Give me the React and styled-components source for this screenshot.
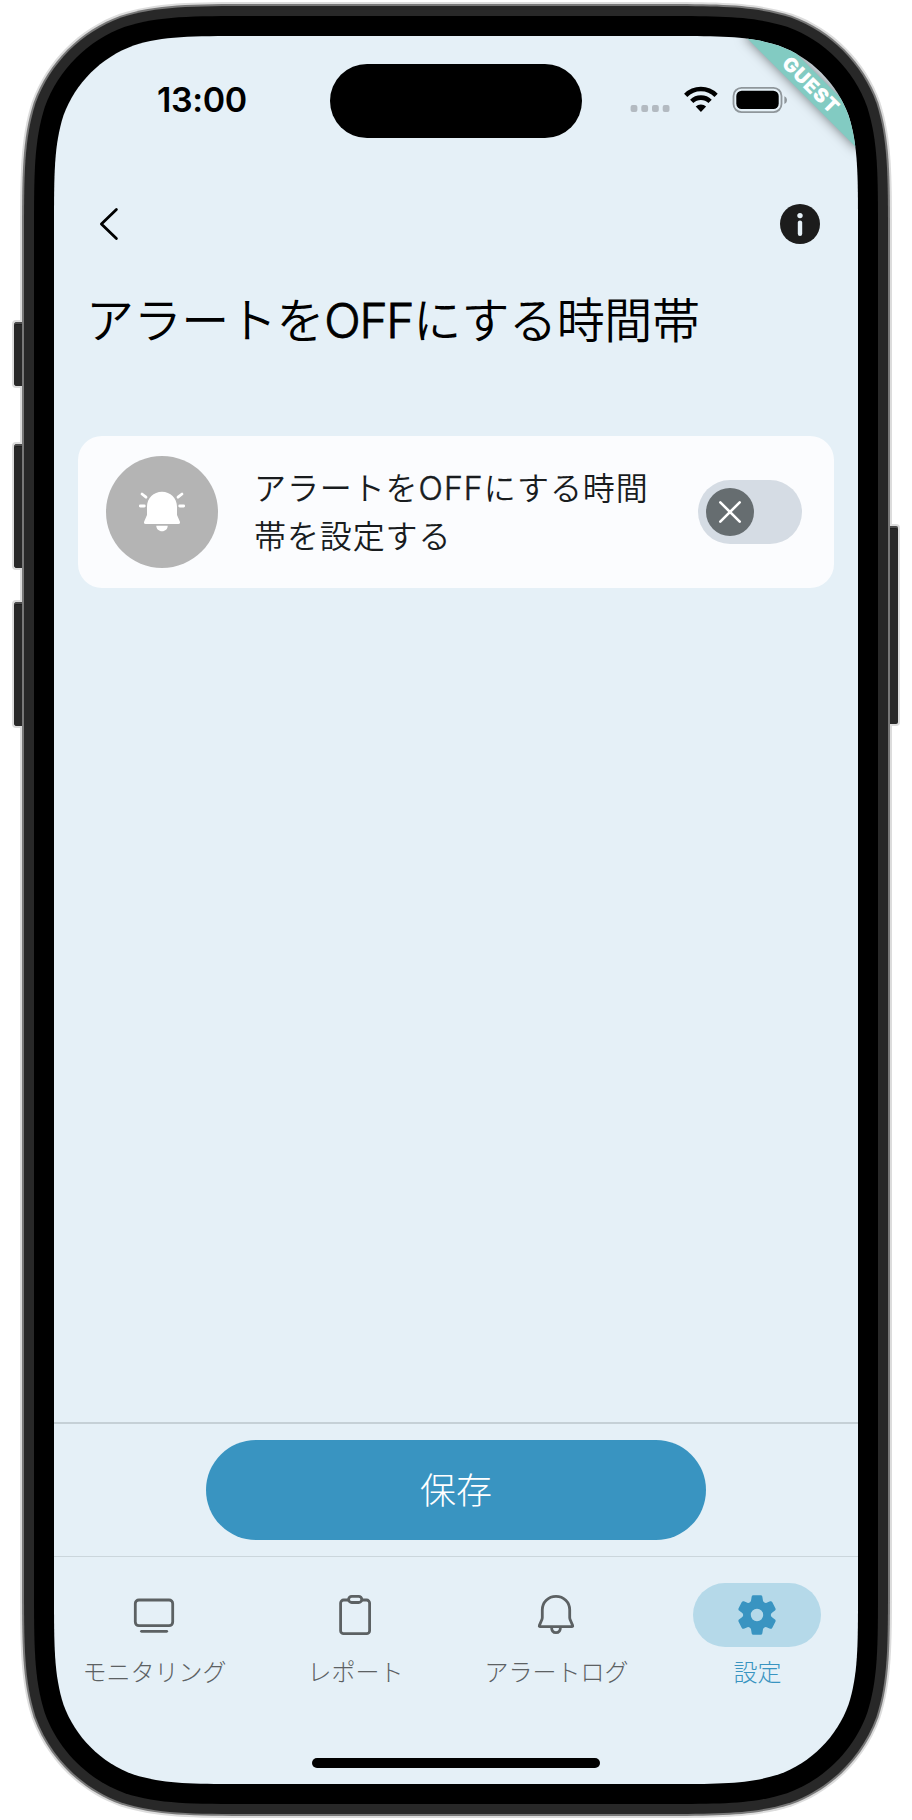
import React from 'react';
import styled, { createGlobalStyle } from 'styled-components';

const Global = createGlobalStyle`
  *, *::before, *::after { box-sizing: border-box; }
  body { margin: 0; background: #fff; }
`;

const JP = `Inter, 'Noto Sans CJK JP', sans-serif`;

/* Continuous-curvature rounded rectangle, as used by the device's corners. */
const squircle = (w, h, r) => {
  const a = 1.52866 * r, b = 1.08849 * r, c = 0.86841 * r, d = 0.63149 * r;
  const e = 0.07491 * r, f = 0.37282 * r, g = 0.16906 * r;
  return [
    `M${a} 0 L${w - a} 0`,
    `C${w - b} 0 ${w - c} 0 ${w - d} ${e}`,
    `C${w - f} ${g} ${w - g} ${f} ${w - e} ${d}`,
    `C${w} ${c} ${w} ${b} ${w} ${a}`,
    `L${w} ${h - a}`,
    `C${w} ${h - b} ${w} ${h - c} ${w - e} ${h - d}`,
    `C${w - g} ${h - f} ${w - f} ${h - g} ${w - d} ${h - e}`,
    `C${w - c} ${h} ${w - b} ${h} ${w - a} ${h}`,
    `L${a} ${h}`,
    `C${b} ${h} ${c} ${h} ${d} ${h - e}`,
    `C${f} ${h - g} ${g} ${h - f} ${e} ${h - d}`,
    `C0 ${h - c} 0 ${h - b} 0 ${h - a}`,
    `L0 ${a}`,
    `C0 ${b} 0 ${c} ${e} ${d}`,
    `C${g} ${f} ${f} ${g} ${d} ${e}`,
    `C${c} 0 ${b} 0 ${a} 0 Z`,
  ].join(' ');
};

const Stage = styled.div`
  display: flex;
  width: 912px;
  height: 1820px;
  padding-top: 2px;
`;

const Rail = styled.div`
  display: flex;
  flex-direction: column;
  width: 20px;
  flex: none;
  z-index: 1;
  align-items: ${(p) => (p.$side === 'left' ? 'flex-end' : 'flex-start')};
`;

const SideKey = styled.div`
  width: 10px;
  height: ${(p) => p.$h}px;
  margin-top: ${(p) => p.$gap}px;
  background: #282828;
  border: 2px solid #dcdcdc;
  box-shadow: inset 0 2px #4b4b4b, inset 0 3px #1d1d1d;
  ${(p) =>
    p.$side === 'left'
      ? 'margin-right: -2px; border-right: 0; border-radius: 4px 0 0 4px;'
      : 'margin-left: -2px; border-left: 0; border-radius: 0 4px 4px 0;'}
`;

const Shell = styled.div`
  flex: none;
  width: ${(p) => p.$w}px;
  height: ${(p) => p.$h}px;
  padding: ${(p) => p.$pad}px;
  background: ${(p) => p.$color};
  clip-path: path('${(p) => squircle(p.$w, p.$h, p.$r)}');
`;

const Screen = styled.main`
  position: relative;
  display: flex;
  flex-direction: column;
  width: 804px;
  height: 1748px;
  background: #e5f0f7;
  clip-path: path('${squircle(804, 1748, 126)}');
  font-family: ${JP};
  color: #000;
`;

const StatusBar = styled.div`
  display: grid;
  grid-template-columns: 276px 252px 276px;
  align-items: center;
  height: 74px;
  margin-top: 27.5px;
`;

const Clock = styled.div`
  padding: 0 0 2px 103px;
  font-size: 34px;
  line-height: 40px;
  font-weight: 600;
  letter-spacing: -0.4px;
`;

const Island = styled.div`
  height: 74.5px;
  border-radius: 38px;
  background: #000;
`;

const StatusIcons = styled.div`
  display: flex;
  align-items: center;
  padding: 0 0 2px 48px;
  height: 42px;
`;

const Ribbon = styled.div`
  position: absolute;
  top: 0;
  right: 0;
  width: 0;
  height: 0;
  transform: rotate(45deg);
`;

const RibbonLabel = styled.div`
  width: 160px;
  height: 24px;
  margin: 56px 0 0 -80px;
  padding-left: 3px;
  background: #82cbc2;
  box-shadow: 0 0 12px rgba(0, 0, 0, 0.5);
  color: #fff;
  font: 900 19.6px/25px Inter, sans-serif;
  letter-spacing: 0.8px;
  text-align: center;
`;

const AppBar = styled.header`
  display: flex;
  align-items: center;
  justify-content: space-between;
  height: 112px;
  margin-top: 30.5px;
  padding: 0 38px 0 34px;
`;

const Title = styled.h1`
  margin: 13px 0 0;
  padding-left: 32px;
  font-size: 48px;
  line-height: 56px;
  font-weight: 350;
  letter-spacing: -0.35px;
  white-space: nowrap;
`;

const Latin = styled.span`
  font-family: Inter, sans-serif;
  font-weight: 350;
  letter-spacing: ${(p) => p.$track}px;
  -webkit-text-stroke: ${(p) => p.$stroke}px currentColor;
`;

const Card = styled.section`
  display: flex;
  align-items: center;
  height: 152px;
  margin: 87px 24px 0;
  padding: 0 32px 0 28px;
  border-radius: 24px;
  background: #fbfcfe;
`;

const Badge = styled.div`
  display: grid;
  place-items: center;
  width: 112px;
  height: 112px;
  border-radius: 50%;
  background: #b4b4b4;
`;

const CardText = styled.p`
  flex: 1;
  margin: 0;
  padding: 2px 0 0 36px;
  font-size: 32px;
  line-height: 48px;
  font-weight: 350;
  letter-spacing: 0.9px;
  color: #191c1e;
  white-space: nowrap;
`;

const Switch = styled.div`
  width: 104px;
  height: 64px;
  padding: 8px;
  border-radius: 32px;
  background: #d5dce4;
`;

const Knob = styled.div`
  display: grid;
  place-items: center;
  width: 48px;
  height: 48px;
  border-radius: 50%;
  background: #666d70;
`;

const SaveBar = styled.div`
  display: flex;
  justify-content: center;
  height: 134px;
  margin-top: auto;
  padding-top: 16px;
  border-top: 2px solid #c5d0d6;
`;

const SaveButton = styled.button`
  width: 500px;
  height: 100px;
  padding: 0 0 4px;
  border: 0;
  border-radius: 50px;
  background: #3994c1;
  color: #fff;
  font-family: ${JP};
  font-size: 36px;
  font-weight: 300;
`;

const NavBar = styled.nav`
  display: grid;
  grid-template-columns: repeat(4, 1fr);
  height: 228px;
  padding-top: 26px;
  border-top: 1px solid #cbd6dc;
`;

const NavItem = styled.div`
  display: flex;
  flex-direction: column;
  align-items: center;
  height: 120px;
  color: ${(p) => (p.$active ? '#3994c1' : '#5c6163')};
`;

const NavPill = styled.div`
  display: grid;
  place-items: center;
  width: 128px;
  height: 64px;
  margin-right: 0.5px;
  border-radius: 32px;
  background: ${(p) => (p.$active ? '#b5d9e9' : 'transparent')};
`;

const NavLabel = styled.span`
  margin-top: 10px;
  font-size: 24px;
  line-height: 32px;
  font-weight: 300;
  white-space: nowrap;
`;

const HomeBar = styled.div`
  position: absolute;
  left: 258px;
  bottom: 16px;
  width: 288px;
  height: 10px;
  border-radius: 5px;
  background: #000;
`;

const Icon = ({ children }) => (
  <svg width="48" height="48" viewBox="0 0 48 48" fill="none" stroke="currentColor"
    strokeWidth="2.8" strokeLinecap="round" strokeLinejoin="round">
    {children}
  </svg>
);

const MonitorIcon = () => (
  <Icon>
    <rect x="5.3" y="9" width="37.4" height="25.7" rx="3.6" />
    <path d="M11.5 40.3H36.7" />
  </Icon>
);

const ReportIcon = () => (
  <Icon>
    <path d="M17 9H12.6a3 3 0 0 0-3 3V39.7a3 3 0 0 0 3 3H35.6a3 3 0 0 0 3-3V12a3 3 0 0 0-3-3H31" />
    <rect x="17.6" y="5.3" width="13.2" height="6.2" rx="3.1" />
  </Icon>
);

const BellIcon = () => (
  <Icon>
    <path d="M10.3 18.8C10.3 11.2 16.3 5.3 24 5.3S37.7 11.2 37.7 18.8V26.5Q37.7 27.8 38.3 29L40.6 34.4Q41.1 35.7 39.8 35.7H8.2Q6.9 35.7 7.4 34.4L9.7 29Q10.3 27.8 10.3 26.5Z" />
    <path d="M19.6 36.5C19.6 39.8 21.5 41.7 24 41.7S28.4 39.8 28.4 36.5" />
  </Icon>
);

const GearIcon = () => (
  <svg width="48" height="48" viewBox="0 0 48 48" fill="currentColor">
    <path
      fillRule="evenodd"
      d="M20.4 4.3H27.6Q29 4.3 29.3 5.6L30 9.8Q30.3 11 31.4 11.5Q32.4 12.2 33.6 11.7L37.1 10.3Q38.4 9.8 39.2 11L42.4 17.3Q43 18.5 42 19.4L39 21.8Q37.8 22.7 37.8 24T39 26.2L42 28.6Q43 29.5 42.4 30.7L39.2 37Q38.4 38.2 37.1 37.7L33.6 36.3Q32.4 35.8 31.4 36.5Q30.3 37 30 38.2L29.3 42.4Q29 43.7 27.6 43.7H20.4Q19 43.7 18.7 42.4L18 38.2Q17.7 37 16.6 36.5Q15.6 35.8 14.4 36.3L10.9 37.7Q9.6 38.2 8.8 37L5.6 30.7Q5 29.5 6 28.6L9 26.2Q10.2 25.3 10.2 24T9 21.8L6 19.4Q5 18.5 5.6 17.3L8.8 11Q9.6 9.8 10.9 10.3L14.4 11.7Q15.6 12.2 16.6 11.5Q17.7 11 18 9.8L18.7 5.6Q19 4.3 20.4 4.3ZM24 17.8a6.2 6.2 0 1 0 0 12.4a6.2 6.2 0 1 0 0-12.4Z"
    />
  </svg>
);

const AlarmIcon = () => (
  <svg width="48" height="48" viewBox="0 0 48 48" fill="#fff">
    <path d="M9 18.7C9 10.4 15.6 3.8 24 3.8S39 10.4 39 18.7V27L41.8 33.6Q42.6 36 40.2 36H7.8Q5.4 36 6.2 33.6L9 27Z" />
    <path d="M18.3 37.8H29.7C29.7 41 27.2 43.3 24 43.3S18.3 41 18.3 37.8Z" />
    <g stroke="#fff" strokeWidth="2.8" strokeLinecap="round">
      <path d="M4 6L8 9.2M2.3 18H6.3M44 6L40 9.2M45.7 18H41.7" />
    </g>
  </svg>
);

const BackIcon = () => (
  <svg width="42" height="48" viewBox="0 0 42 48" fill="none" stroke="#000" strokeWidth="2.8"
    strokeLinecap="round" strokeLinejoin="round">
    <path d="M28.4 9.4L13.4 24L28.4 38.6" />
  </svg>
);

const InfoIcon = () => (
  <svg width="40" height="40" viewBox="0 0 40 40">
    <circle cx="20" cy="20" r="20" fill="#1c1c1c" />
    <circle cx="20" cy="11.6" r="2.7" fill="#e5f0f7" />
    <rect x="17.8" y="16.4" width="4.4" height="15.6" rx="2.2" fill="#e5f0f7" />
  </svg>
);

const CloseIcon = () => (
  <svg width="24" height="24" viewBox="0 0 24 24" stroke="#fff" strokeWidth="2.6" strokeLinecap="round">
    <path d="M2.3 2.3L21.7 21.7M21.7 2.3L2.3 21.7" />
  </svg>
);

const Signals = () => (
  <svg width="160" height="40" viewBox="0 0 160 40">
    {[0, 1, 2, 3].map((i) => (
      <rect key={i} x={0.6 + i * 10.7} y="25" width="6.8" height="7" rx="2" fill="#b3bac1" />
    ))}
    <g transform="translate(70.9 19.4)" fill="none" stroke="#000" strokeWidth="4.6">
      <path d="M-15.2 -4.1A21.6 21.6 0 0 1 15.2 -4.1" />
      <path d="M-9.2 2A13 13 0 0 1 9.2 2" />
      <path d="M-5.2 7.2A7.3 7.3 0 0 1 5.2 7.2L0.5 12Q0 12.5 -0.5 12Z" fill="#000" stroke="none" />
    </g>
    <rect x="103.5" y="7.9" width="48" height="24.2" rx="8" fill="none" stroke="#8f969b" strokeWidth="1.8" />
    <rect x="106.3" y="10.7" width="42.4" height="18.4" rx="5.4" fill="#000" />
    <path d="M154.4 16.2C157.8 17.6 157.8 22.6 154.4 24Z" fill="#8f969b" />
  </svg>
);

const NAV = [
  { label: 'モニタリング', Glyph: MonitorIcon },
  { label: 'レポート', Glyph: ReportIcon },
  { label: 'アラートログ', Glyph: BellIcon },
  { label: '設定', Glyph: GearIcon, active: true },
];

export default function App() {
  return (
    <>
      <Global />
      <Stage>
        <Rail $side="left">
          <SideKey $side="left" $h={68} $gap={318} />
          <SideKey $side="left" $h={128} $gap={54} />
          <SideKey $side="left" $h={128} $gap={30} />
        </Rail>
        <Shell $w={872} $h={1816} $r={158} $pad={2} $color="#dcdcdc">
          <Shell $w={868} $h={1812} $r={156} $pad={2} $color="#787878">
            <Shell $w={864} $h={1808} $r={154} $pad={10} $color="#282828">
              <Shell $w={844} $h={1788} $r={144} $pad={20} $color="#000">
                <Screen>
                  <StatusBar>
                    <Clock>13:00</Clock>
                    <Island />
                    <StatusIcons><Signals /></StatusIcons>
                  </StatusBar>
                  <AppBar>
                    <BackIcon />
                    <InfoIcon />
                  </AppBar>
                  <Title>アラートを<Latin $track={-1.3} $stroke={0.8}>OFF</Latin>にする時間帯</Title>
                  <Card>
                    <Badge><AlarmIcon /></Badge>
                    <CardText>
                      アラートを<Latin $track={1.1} $stroke={0.5}>OFF</Latin>にする時間<br />帯を設定する
                    </CardText>
                    <Switch><Knob><CloseIcon /></Knob></Switch>
                  </Card>
                  <SaveBar><SaveButton>保存</SaveButton></SaveBar>
                  <NavBar>
                    {NAV.map(({ label, Glyph, active }) => (
                      <NavItem key={label} $active={active}>
                        <NavPill $active={active}><Glyph /></NavPill>
                        <NavLabel>{label}</NavLabel>
                      </NavItem>
                    ))}
                  </NavBar>
                  <HomeBar />
                  <Ribbon><RibbonLabel>GUEST</RibbonLabel></Ribbon>
                </Screen>
              </Shell>
            </Shell>
          </Shell>
        </Shell>
        <Rail $side="right">
          <SideKey $side="right" $h={201.5} $gap={522} />
        </Rail>
      </Stage>
    </>
  );
}
